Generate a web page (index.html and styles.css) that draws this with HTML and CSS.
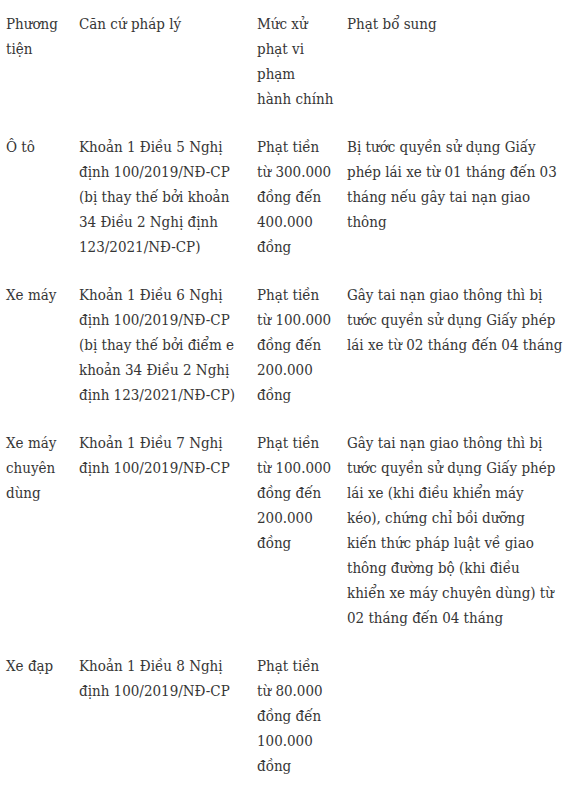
FILE: index.html
```html
<!DOCTYPE html>
<html lang="vi">
<head>
<meta charset="utf-8">
<link rel="stylesheet" href="styles.css">
</head>
<body>
<table class="fines">
  <colgroup>
    <col class="c1"><col class="c2"><col class="c3"><col class="c4">
  </colgroup>
  <tr>
    <td>Phương<br>tiện</td>
    <td>Căn cứ pháp lý</td>
    <td>Mức xử<br>phạt vi<br>phạm<br>hành chính</td>
    <td>Phạt bổ sung</td>
  </tr>
  <tr>
    <td>Ô tô</td>
    <td>Khoản 1 Điều 5 Nghị<br>định 100/2019/NĐ-CP<br>(bị thay thế bởi khoản<br>34 Điều 2 Nghị định<br>123/2021/NĐ-CP)</td>
    <td>Phạt tiền<br>từ 300.000<br>đồng đến<br>400.000<br>đồng</td>
    <td>Bị tước quyền sử dụng Giấy<br>phép lái xe từ 01 tháng đến 03<br>tháng nếu gây tai nạn giao<br>thông</td>
  </tr>
  <tr>
    <td>Xe máy</td>
    <td>Khoản 1 Điều 6 Nghị<br>định 100/2019/NĐ-CP<br>(bị thay thế bởi điểm e<br>khoản 34 Điều 2 Nghị<br>định 123/2021/NĐ-CP)</td>
    <td>Phạt tiền<br>từ 100.000<br>đồng đến<br>200.000<br>đồng</td>
    <td>Gây tai nạn giao thông thì bị<br>tước quyền sử dụng Giấy phép<br>lái xe từ 02 tháng đến 04 tháng</td>
  </tr>
  <tr>
    <td>Xe máy<br>chuyên<br>dùng</td>
    <td>Khoản 1 Điều 7 Nghị<br>định 100/2019/NĐ-CP</td>
    <td>Phạt tiền<br>từ 100.000<br>đồng đến<br>200.000<br>đồng</td>
    <td>Gây tai nạn giao thông thì bị<br>tước quyền sử dụng Giấy phép<br>lái xe (khi điều khiển máy<br>kéo), chứng chỉ bồi dưỡng<br>kiến thức pháp luật về giao<br>thông đường bộ (khi điều<br>khiển xe máy chuyên dùng) từ<br>02 tháng đến 04 tháng</td>
  </tr>
  <tr>
    <td>Xe đạp</td>
    <td>Khoản 1 Điều 8 Nghị<br>định 100/2019/NĐ-CP</td>
    <td>Phạt tiền<br>từ 80.000<br>đồng đến<br>100.000<br>đồng</td>
    <td></td>
  </tr>
</table>
</body>
</html>
```
FILE: styles.css
```css
html, body {
  margin: 0;
  padding: 0;
  background: #ffffff;
}
body {
  font-family: "DejaVu Serif Condensed", "DejaVu Serif", serif;
  font-stretch: condensed;
  font-size: 15px;
  line-height: 25px;
  color: #363636;
}
.fines {
  border-collapse: collapse;
  width: 580px;
  table-layout: fixed;
}
.fines td {
  vertical-align: top;
  padding: 11.5px 0 11.5px 6px;
  white-space: nowrap;
}
.c1 { width: 73px; }
.c2 { width: 178px; }
.c3 { width: 90px; }
.c4 { width: 239px; }
```
